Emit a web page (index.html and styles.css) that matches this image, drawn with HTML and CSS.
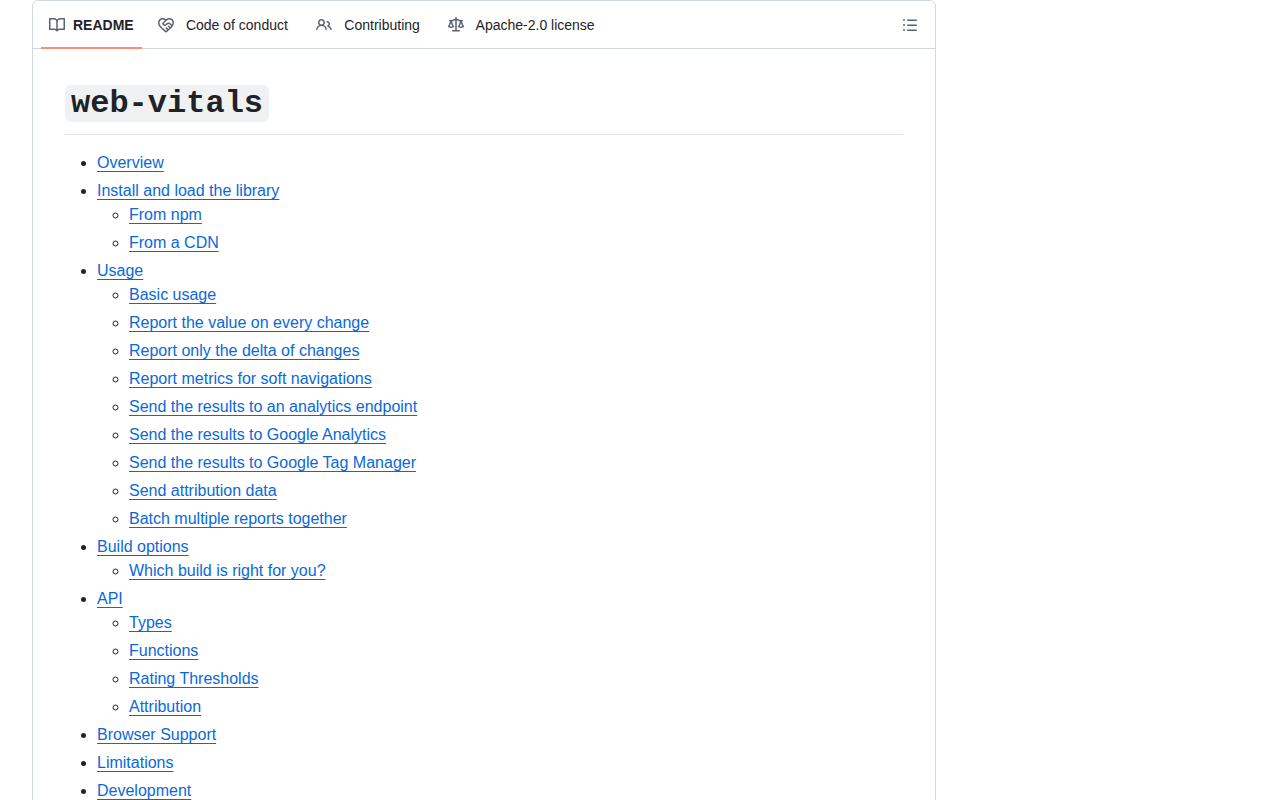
FILE: index.html
```html
<!DOCTYPE html>
<html lang="en">
<head>
    <meta charset="UTF-8">
    <title>web-vitals</title>
    <link rel="stylesheet" href="styles.css">
</head>
<body>
    <div class="layout">
        <main class="readme">
            <div class="readme-header">
                <nav class="tabs" aria-label="Repository files">
                    <a class="tab selected" href="#readme" aria-current="page">
                        <svg class="icon" viewBox="0 0 16 16" aria-hidden="true"><path d="M0 1.75A.75.75 0 0 1 .75 1h4.253c1.227 0 2.317.59 3 1.501A3.743 3.743 0 0 1 11.006 1h4.245a.75.75 0 0 1 .75.75v10.5a.75.75 0 0 1-.75.75h-4.507a2.25 2.25 0 0 0-1.591.659l-.622.621a.75.75 0 0 1-1.06 0l-.622-.621A2.25 2.25 0 0 0 5.258 13H.75a.75.75 0 0 1-.75-.75Zm7.251 10.324.004-5.073-.002-2.253A2.25 2.25 0 0 0 5.003 2.5H1.5v9h3.757a3.75 3.75 0 0 1 1.994.574ZM8.755 4.75l-.004 7.322a3.752 3.752 0 0 1 1.992-.572H14.5v-9h-3.495a2.25 2.25 0 0 0-2.25 2.25Z"/></svg>
                        <span class="tab-text" data-content="README">README</span>
                    </a>
                    <a class="tab" href="#conduct">
                        <svg class="icon" viewBox="0 0 16 16" aria-hidden="true"><path d="M8.048 2.241c.964-.709 2.079-1.238 3.325-1.241a4.616 4.616 0 0 1 3.282 1.355c.41.408.757.86.996 1.428.238.568.348 1.206.347 1.968 0 2.193-1.505 4.254-3.081 5.862-1.496 1.526-3.213 2.796-4.249 3.563l-.22.163a.749.749 0 0 1-.895 0l-.221-.163c-1.036-.767-2.753-2.037-4.249-3.563C1.51 10.008.007 7.952.002 5.762a4.614 4.614 0 0 1 1.353-3.407C3.123.585 6.223.537 8.048 2.24Zm-1.153.983c-1.25-1.033-3.321-.967-4.48.191a3.115 3.115 0 0 0-.913 2.335c0 1.556 1.109 3.24 2.652 4.813C5.463 11.898 6.96 13.032 8 13.805c.353-.262.758-.565 1.191-.905l-1.326-1.223a.75.75 0 0 1 1.018-1.102l1.48 1.366c.328-.281.659-.577.984-.887L9.99 9.802a.75.75 0 1 1 1.019-1.103l1.384 1.28c.295-.329.566-.661.81-.995L12.92 8.7l-1.167-1.168c-.674-.671-1.78-.664-2.474.03-.268.269-.538.537-.802.797-.893.882-2.319.843-3.185-.032-.346-.35-.693-.697-1.043-1.047a.75.75 0 0 1-.04-1.016c.162-.191.336-.401.52-.623.62-.748 1.356-1.637 2.166-2.417Zm7.112 4.442c.313-.65.491-1.293.491-1.916v-.001c0-.614-.088-1.045-.23-1.385-.143-.339-.357-.633-.673-.949a3.111 3.111 0 0 0-2.218-.915c-1.092.003-2.165.627-3.226 1.602-.823.755-1.554 1.637-2.228 2.45l-.127.154.562.566a.755.755 0 0 0 1.066.02l.794-.79c1.258-1.258 3.312-1.31 4.594-.032.396.394.792.791 1.173 1.173Z"/></svg>
                        <span class="tab-text" data-content="Code of conduct">Code of conduct</span>
                    </a>
                    <a class="tab" href="#contributing">
                        <svg class="icon" viewBox="0 0 16 16" aria-hidden="true"><path d="M2 5.5a3.5 3.5 0 1 1 5.898 2.549 5.508 5.508 0 0 1 3.034 4.084.75.75 0 1 1-1.482.235 4 4 0 0 0-7.9 0 .75.75 0 0 1-1.482-.236A5.507 5.507 0 0 1 3.102 8.05 3.493 3.493 0 0 1 2 5.5ZM11 4a3.001 3.001 0 0 1 2.22 5.018 5.01 5.01 0 0 1 2.56 3.012.749.749 0 0 1-.885.954.752.752 0 0 1-.549-.514 3.507 3.507 0 0 0-2.522-2.372.75.75 0 0 1-.574-.73v-.352a.75.75 0 0 1 .416-.672A1.5 1.5 0 0 0 11 5.5.75.75 0 0 1 11 4Zm-5.5-.5a2 2 0 1 0-.001 3.999A2 2 0 0 0 5.5 3.5Z"/></svg>
                        <span class="tab-text" data-content="Contributing">Contributing</span>
                    </a>
                    <a class="tab" href="#license">
                        <svg class="icon" viewBox="0 0 16 16" aria-hidden="true"><path d="M8.75.75V2h.985c.304 0 .603.08.867.231l1.29.736c.038.022.08.033.124.033h2.234a.75.75 0 0 1 0 1.5h-.427l2.111 4.692a.75.75 0 0 1-.154.838l-.53-.53.529.531-.001.002-.002.002-.006.006-.006.005-.01.01-.045.04c-.21.176-.441.327-.686.45C14.556 10.78 13.88 11 13 11a4.498 4.498 0 0 1-2.023-.454 3.544 3.544 0 0 1-.686-.45l-.045-.04-.016-.015-.006-.006-.004-.004v-.001a.75.75 0 0 1-.154-.838L12.178 4.5h-.162c-.305 0-.604-.079-.868-.231l-1.29-.736a.245.245 0 0 0-.124-.033H8.75V13h2.5a.75.75 0 0 1 0 1.5h-6.5a.75.75 0 0 1 0-1.5h2.5V3.5h-.984a.245.245 0 0 0-.124.033l-1.289.737c-.265.15-.564.23-.869.23h-.162l2.112 4.692a.75.75 0 0 1-.154.838l-.53-.53.529.531-.001.002-.002.002-.006.006-.016.015-.045.04c-.21.176-.441.327-.686.45C4.556 10.78 3.88 11 3 11a4.498 4.498 0 0 1-2.023-.454 3.544 3.544 0 0 1-.686-.45l-.045-.04-.016-.015-.006-.006-.004-.004v-.001a.75.75 0 0 1-.154-.838L2.178 4.5H1.75a.75.75 0 0 1 0-1.5h2.234a.249.249 0 0 0 .125-.033l1.288-.737c.265-.15.564-.23.869-.23h.984V.75a.75.75 0 0 1 1.5 0Zm2.945 8.477c.285.135.718.273 1.305.273s1.02-.138 1.305-.273L13 6.327Zm-10 0c.285.135.718.273 1.305.273s1.02-.138 1.305-.273L3 6.327Z"/></svg>
                        <span class="tab-text" data-content="Apache-2.0 license">Apache-2.0 license</span>
                    </a>
                </nav>
                <button class="outline-button" type="button" aria-label="Outline">
                    <svg class="icon" viewBox="0 0 16 16" aria-hidden="true"><path d="M5.75 2.5h8.5a.75.75 0 0 1 0 1.5h-8.5a.75.75 0 0 1 0-1.5Zm0 5h8.5a.75.75 0 0 1 0 1.5h-8.5a.75.75 0 0 1 0-1.5Zm0 5h8.5a.75.75 0 0 1 0 1.5h-8.5a.75.75 0 0 1 0-1.5ZM2 14a1 1 0 1 1 0-2 1 1 0 0 1 0 2Zm1-6a1 1 0 1 1-2 0 1 1 0 0 1 2 0ZM2 4a1 1 0 1 1 0-2 1 1 0 0 1 0 2Z"/></svg>
                </button>
            </div>

            <article class="markdown" id="readme">
                <h1><code>web-vitals</code></h1>
                <ul>
                    <li><a href="#overview">Overview</a></li>
                    <li><a href="#install">Install and load the library</a>
                        <ul>
                            <li><a href="#npm">From npm</a></li>
                            <li><a href="#cdn">From a CDN</a></li>
                        </ul>
                    </li>
                    <li><a href="#usage">Usage</a>
                        <ul>
                            <li><a href="#basic-usage">Basic usage</a></li>
                            <li><a href="#every-change">Report the value on every change</a></li>
                            <li><a href="#delta">Report only the delta of changes</a></li>
                            <li><a href="#soft-navigations">Report metrics for soft navigations</a></li>
                            <li><a href="#endpoint">Send the results to an analytics endpoint</a></li>
                            <li><a href="#google-analytics">Send the results to Google Analytics</a></li>
                            <li><a href="#tag-manager">Send the results to Google Tag Manager</a></li>
                            <li><a href="#attribution-data">Send attribution data</a></li>
                            <li><a href="#batch">Batch multiple reports together</a></li>
                        </ul>
                    </li>
                    <li><a href="#build-options">Build options</a>
                        <ul>
                            <li><a href="#which-build">Which build is right for you?</a></li>
                        </ul>
                    </li>
                    <li><a href="#api">API</a>
                        <ul>
                            <li><a href="#types">Types</a></li>
                            <li><a href="#functions">Functions</a></li>
                            <li><a href="#rating-thresholds">Rating Thresholds</a></li>
                            <li><a href="#attribution">Attribution</a></li>
                        </ul>
                    </li>
                    <li><a href="#browser-support">Browser Support</a></li>
                    <li><a href="#limitations">Limitations</a></li>
                    <li><a href="#development">Development</a></li>
                </ul>
            </article>
        </main>
    </div>
</body>
</html>
```
FILE: styles.css
```css
* {
    box-sizing: border-box;
}

body {
    margin: 0;
    background: #fff;
    color: #1f2328;
    font-family: "Liberation Sans", Arial, sans-serif;
    font-size: 14px;
    line-height: 21px;
}

/* second column is the sidebar */
.layout {
    display: grid;
    grid-template-columns: minmax(0, 1fr) 296px;
    gap: 24px;
    padding: 0 24px 0 32px;
}

.readme {
    border: 1px solid #d1d9e0;
    border-radius: 6px;
}

.readme-header {
    display: flex;
    justify-content: space-between;
    align-items: center;
    padding: 0 8px;
    border-bottom: 1px solid #d1d9e0;
}

.tabs {
    display: flex;
    gap: 8px;
    margin-bottom: -1px;
}

.tab {
    display: flex;
    align-items: center;
    gap: 8px;
    height: 48px;
    padding: 2px 8px 0;
    border-bottom: 2px solid transparent;
    color: #1f2328;
    text-decoration: none;
}

.tab.selected {
    border-bottom-color: #fd8c73;
    font-weight: 600;
}

.tab-text {
    display: flex;
    flex-direction: column;
    align-items: center;
}

/* keeps room for the bold label so tabs don't shift when selected */
.tab-text::before {
    content: attr(data-content);
    height: 0;
    visibility: hidden;
    font-weight: 600;
}

.icon {
    display: block;
    width: 16px;
    height: 16px;
    fill: #59636e;
}

.outline-button {
    padding: 8px;
    border: 1px solid transparent;
    border-radius: 6px;
    background: transparent;
    cursor: pointer;
}

.markdown {
    padding: 32px;
    font-size: 16px;
    line-height: 24px;
}

.markdown h1 {
    margin: 0 0 16px;
    padding-bottom: 10px;
    border-bottom: 1px solid #d1d9e0b3;
    font-size: 32px;
    line-height: 40px;
}

.markdown code {
    padding: 0 6px;
    border-radius: 6px;
    background: #818b981f;
    font-family: "Liberation Mono", monospace;
}

.markdown ul {
    margin: 0;
    padding-left: 32px;
}

.markdown li + li {
    margin-top: 4px;
}

.markdown a {
    color: #0969da;
    text-decoration: underline;
    text-underline-offset: 3px;
}
```
